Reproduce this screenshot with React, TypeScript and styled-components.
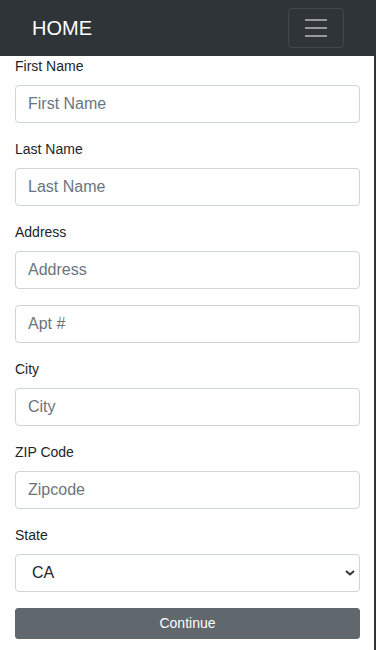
import React from "react";
import styled, { createGlobalStyle } from "styled-components";

const GlobalStyle = createGlobalStyle`
  html, body {
    margin: 0;
    padding: 0;
    background: #ffffff;
  }
  body {
    font-family: "Liberation Sans", Arial, sans-serif;
    font-size: 16px;
    line-height: 1.5;
    color: #212529;
  }
  * { box-sizing: border-box; }
`;

const Page = styled.div`
  width: 376px;
  min-height: 650px;
  border-right: 2px solid #2e3337;
  display: flex;
  flex-direction: column;
`;

const NavBar = styled.nav`
  height: 56px;
  background: #2f3438;
  padding: 8px 32px;
  margin-right: -2px;
  display: flex;
  align-items: center;
  justify-content: space-between;
`;

const Brand = styled.a`
  color: #ffffff;
  font-size: 20px;
  line-height: 30px;
  padding: 5px 0;
  text-decoration: none;
`;

const Toggler = styled.button`
  width: 56px;
  height: 40px;
  padding: 4px 12px;
  background: transparent;
  border: 1px solid rgba(255, 255, 255, 0.1);
  border-radius: 4px;
  display: flex;
  align-items: center;
  justify-content: center;
`;

const Form = styled.form`
  padding: 0 14px 0 15px;
  display: flex;
  flex-direction: column;
`;

const Group = styled.div`
  display: flex;
  flex-direction: column;
  margin-bottom: 16px;
`;

const Label = styled.label`
  font-size: 14px;
  line-height: 21px;
  margin-bottom: 8px;
  color: #212529;
`;

const Input = styled.input`
  height: 38px;
  width: 100%;
  padding: 6px 12px;
  font-family: "Liberation Sans", Arial, sans-serif;
  font-size: 16px;
  line-height: 24px;
  color: #495057;
  background: #ffffff;
  border: 1px solid #ced4da;
  border-radius: 4px;
  outline: none;
  &::placeholder {
    color: #6c757d;
    opacity: 1;
  }
`;

const SelectWrap = styled.div`
  position: relative;
`;

const Select = styled.select`
  height: 38px;
  width: 100%;
  padding: 6px 12px 6px 16px;
  font-family: "Liberation Sans", Arial, sans-serif;
  font-size: 16px;
  line-height: 24px;
  color: #212529;
  background: #ffffff;
  border: 1px solid #ced4da;
  border-radius: 4px;
  appearance: none;
  -webkit-appearance: none;
  outline: none;
`;

const Chevron = styled.svg`
  position: absolute;
  right: 5px;
  top: 16px;
  pointer-events: none;
`;

const Button = styled.button`
  width: 100%;
  height: 31px;
  padding: 4px 8px;
  font-family: "Liberation Sans", Arial, sans-serif;
  font-size: 14px;
  line-height: 21px;
  color: #ffffff;
  background: #60676d;
  border: 1px solid #60676d;
  border-radius: 3px;
`;

const fields: { label?: string; placeholder: string }[] = [
  { label: "First Name", placeholder: "First Name" },
  { label: "Last Name", placeholder: "Last Name" },
  { label: "Address", placeholder: "Address" },
  { placeholder: "Apt #" },
  { label: "City", placeholder: "City" },
  { label: "ZIP Code", placeholder: "Zipcode" },
];

export default function App() {
  return (
    <>
      <GlobalStyle />
      <Page>
        <NavBar>
          <Brand href="#">HOME</Brand>
          <Toggler type="button" aria-label="Toggle navigation">
            <svg width="30" height="30" viewBox="0 0 30 30">
              <path
                d="M4 7h22M4 15h22M4 23h22"
                stroke="rgba(255,255,255,0.5)"
                strokeWidth="2"
                strokeLinecap="butt"
                fill="none"
              />
            </svg>
          </Toggler>
        </NavBar>
        <Form onSubmit={(e) => e.preventDefault()}>
          {fields.map((f) => (
            <Group key={f.placeholder}>
              {f.label && <Label>{f.label}</Label>}
              <Input type="text" placeholder={f.placeholder} />
            </Group>
          ))}
          <Group>
            <Label>State</Label>
            <SelectWrap>
              <Select defaultValue="CA">
                <option value="CA">CA</option>
                <option value="NY">NY</option>
                <option value="TX">TX</option>
              </Select>
              <Chevron width="10" height="6" viewBox="0 0 10 6">
                <path
                  d="M1 1l4 3.5L9 1"
                  stroke="#333"
                  strokeWidth="2"
                  fill="none"
                />
              </Chevron>
            </SelectWrap>
          </Group>
          <Button type="submit">Continue</Button>
        </Form>
      </Page>
    </>
  );
}
